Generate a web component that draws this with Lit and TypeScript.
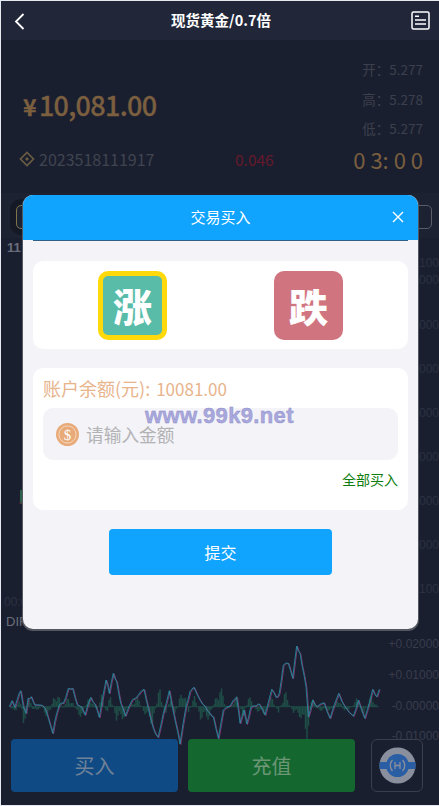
import { LitElement, html, css, svg } from "lit";
import { customElement } from "lit/decorators.js";

const LINE: number[][] = [[28,320],[36,302],[44,322],[52,298],[62,272],[70,320],[78,340],[84,295],[94,290],[104,315],[120,315],[135,325],[145,355],[158,400],[170,340],[178,315],[190,310],[205,265],[218,265],[232,315],[244,320],[255,345],[272,292],[285,312],[298,352],[318,240],[328,280],[340,220],[350,245],[362,310],[376,348],[398,298],[415,285],[432,268],[445,325],[460,385],[474,412],[490,340],[508,272],[525,360],[540,432],[558,320],[570,275],[582,262],[600,300],[615,318],[630,340],[640,350],[655,415],[670,330],[690,318],[710,292],[720,370],[732,330],[740,372],[752,322],[768,318],[778,312],[795,345],[815,268],[828,292],[838,280],[850,195],[865,190],[878,235],[890,138],[900,160],[912,225],[918,260],[925,350],[938,300],[950,320],[972,308],[990,355],[1016,280],[1035,320],[1060,348],[1075,300],[1094,355],[1118,268],[1130,290],[1138,268]];
const HIST: number[][] = [[30,0],[45,-20],[60,30],[72,-50],[85,35],[100,-15],[125,0],[145,-35],[165,40],[175,30],[190,-10],[205,30],[225,0],[235,-30],[250,-15],[270,30],[290,-10],[305,30],[320,-30],[330,35],[350,-35],[370,-30],[395,10],[415,25],[430,-10],[445,-35],[460,-45],[480,55],[495,-25],[510,30],[525,-30],[550,60],[565,-20],[585,30],[600,-30],[630,-30],[660,60],[680,-10],[710,25],[730,-30],[745,30],[770,-10],[790,-20],[815,25],[835,-15],[855,40],[880,-15],[900,-25],[915,-60],[922,-95],[935,30],[950,-10],[1000,-10],[1015,30],[1035,-20],[1070,20],[1090,-20],[1115,30],[1135,-5]];
const BASE = 706.7;

function lerp(a: number[][], x: number): number {
  for (let i = 1; i < a.length; i++) {
    if (x <= a[i][0]) {
      const t = (x - a[i - 1][0]) / (a[i][0] - a[i - 1][0]);
      return a[i - 1][1] + (a[i][1] - a[i - 1][1]) * t;
    }
  }
  return a[a.length - 1][1];
}

const samples: { x: number; y: number }[] = [];
LINE.forEach(([x, y], i) => {
  samples.push({ x: x / 3, y: 600 + y / 3 });
  const next = LINE[i + 1];
  if (next && next[0] - x >= 9) {
    const mx = (x + next[0]) / 2;
    const my = (y + next[1]) / 2;
    samples.push({ x: mx / 3, y: 600 + my / 3 + Math.sin(x * 1.3) * 1.4 });
  }
});
const cyan = samples.map((p) => `${p.x.toFixed(1)},${p.y.toFixed(1)}`).join(" ");
const pink = samples.map((p) => `${(p.x + 0.8).toFixed(1)},${(p.y + 0.5).toFixed(1)}`).join(" ");

const bars: { x: number; v: number }[] = [];
for (let zx = 30; zx <= 1135; zx += 4.5) {
  const comb = 0.85 + 0.45 * Math.sin(zx * 1.1);
  bars.push({ x: zx / 3, v: (lerp(HIST, zx) / 3) * comb });
}

const UPPER: [number, string][] = [[263,"5.28100"],[280,"5.28000"],[325,"5.27000"],[369,"5.26000"],[413,"5.25000"],[457,"5.24000"],[501,"5.23000"],[545,"5.22000"],[589,"5.21100"]];
const LOWER: [number, string][] = [[644,"+0.02000"],[675,"+0.01000"],[706,"-0.00000"],[736,"-0.01000"]];

@customElement("app-root")
export class AppRoot extends LitElement {
  static styles = css`
    :host { display: block; position: relative; width: 439px; height: 806px; overflow: hidden; background: #e6e9f0;
      font-family: "Noto Sans CJK SC", "Liberation Sans", sans-serif; }
    .page { margin: 1px 0 0 1px; height: 804px; display: flex; flex-direction: column; background: #1a1f30; overflow: hidden; }
    .top { height: 39px; flex: none; display: flex; align-items: center; justify-content: space-between; padding: 0 9px 0 13px; background: #212639; position: relative; }
    .title { font-size: 14.5px; font-weight: 700; color: #fff; flex: 1; text-align: center; margin-left: 5px; line-height: 38px; height: 39px; }
    .top svg { display: block; }
    .info { height: 153px; flex: none; box-sizing: border-box; padding: 15px 16px 0 18px; }
    .r1 { display: flex; justify-content: space-between; height: 88px; }
    .price { font-size: 27px; font-weight: 500; color: #7b5f3f; padding: 29px 0 0 4px; line-height: 42px; letter-spacing: -0.7px; -webkit-text-stroke: 0.3px #7b5f3f; }
    .price span { font-size: 23px; font-weight: 700; margin-right: 3px; }
    .ohlc { display: flex; flex-direction: column; font-size: 13.5px; color: #3c404c; line-height: 29.5px; text-align: right; }
    .r2 { display: flex; align-items: center; height: 32px; padding-bottom: 2px; }
    .code { font-size: 16px; color: #40444f; margin-left: 4px; width: 196px; }
    .chg { font-size: 15.5px; color: #66192a; flex: 1; }
    .time { font-size: 22px; color: #7b5f3f; line-height: 28px; }
    .tabs { height: 45px; flex: none; box-sizing: border-box; padding: 12px 7px 9px 15px; display: flex; justify-content: space-between; background: #1d2233; }
    .tab { width: 80px; border-radius: 5px; border: 1px solid #5a5d68; }
    .tab.on { border-color: #7d7448; box-shadow: 0 0 0 6px #151926; }
    .chart { flex: 1; min-height: 0; }
    .chart svg { display: block; overflow: visible; }
    .lb { font: 12px "Liberation Sans", sans-serif; fill: #2c3140; text-anchor: end; }
    .lb2 { font: 12px "Liberation Sans", sans-serif; fill: #383c4a; text-anchor: end; }
    .lt { font: 12px "Liberation Sans", sans-serif; fill: #2c3140; }
    .dif { font: 13px "Liberation Sans", sans-serif; fill: #6a6e7a; }
    .tm { font: 13px "Liberation Sans", sans-serif; fill: #6a6e7a; font-weight: 700; }
    .bottom { flex: none; position: relative; height: 53px; margin-bottom: 13px; padding-left: 10px; display: flex; }
    .b { width: 167px; margin-right: 10px; border-radius: 4px; display: flex; align-items: center; justify-content: center; font-size: 20px; }
    .buy { background: #104a84; color: #6f8298; }
    .pay { background: #14682f; color: #6c9676; }
    .logo { width: 52px; margin-left: 6px; box-sizing: border-box; border: 1px solid #3a3e4e; border-radius: 6px; display: flex; align-items: center; justify-content: center; }
    .modal { position: absolute; left: 23px; top: 195px; width: 395px; height: 434px; box-sizing: border-box; background: #f3f3f8; border-radius: 10px; box-shadow: 0 1px 0 1px #555760; overflow: hidden; }
    .mh { height: 45px; background: #10a4ff; display: flex; align-items: center; justify-content: center; position: relative; color: #fff; font-size: 15px; line-height: 44px; padding-bottom: 1px; box-sizing: border-box; }
    .mh svg { position: absolute; right: 14px; top: 16px; }
    .rule { height: 1px; margin: 0 10px; background: #2f5f86; }
    .card { margin: 0 10px; background: #fff; border-radius: 10px; }
    .pick { margin-top: 20px; height: 88px; position: relative; display: flex; align-items: center; padding-left: 65px; gap: 107px; box-sizing: border-box; }
    .bx { width: 69px; height: 69px; box-sizing: border-box; border-radius: 10px; display: flex; align-items: center; justify-content: center; color: #fff; font-size: 39px; font-weight: 900; line-height: 1; }
    .up { background: #58bca9; border: 5px solid #ffd90a; }
    .dn { background: #d07480; }
    .form { margin-top: 19px; height: 142px; padding: 9px 10px 0; box-sizing: border-box; }
    .bal { font-size: 18px; line-height: 22px; height: 22px; color: #e8b48c; white-space: nowrap; }
    .bal span { font-size: 17px; margin-left: 6px; }
    .field { margin-top: 9px; height: 52px; background: #f3f3f8; border-radius: 10px; display: flex; align-items: center; padding-left: 13px; }
    .ph { font-size: 17.7px; color: #b2b2b4; margin-left: 7px; line-height: 22px; padding-bottom: 1px; }
    .all { text-align: right; font-size: 14px; color: #0d7d0d; margin-top: 8px; line-height: 22px; }
    .act { margin: 19px auto 0; width: 223px; height: 46px; background: #10a4ff; border-radius: 4px; color: #fff; font-size: 16px; display: flex; align-items: center; justify-content: center; }
    .mark { position: absolute; left: 145px; top: 403px; font: 700 22px "Liberation Sans", sans-serif; color: #a9a8dd; letter-spacing: 0.35px; -webkit-text-stroke: 0.4px #8c8bc6; white-space: nowrap; }
  `;

  render() {
    return html`
      <div class="page">
        <div class="top">
          <svg width="12" height="18" viewBox="0 0 12 18"><path d="M9.5 2 L2 9.5 L9.5 17" fill="none" stroke="#fff" stroke-width="1.8"/></svg>
          <div class="title">现货黄金/0.7倍</div>
          <svg width="19" height="19" viewBox="0 0 19 19" fill="none"><rect x="1" y="1" width="17" height="17" rx="1.5" stroke="#fff" stroke-width="1.5"/><path d="M4 5.2h4M4 9h11M4 13h11" stroke="#fff" stroke-width="1.6"/></svg>
        </div>
        <div class="info">
          <div class="r1">
            <div class="price"><span>¥</span>10,081.00</div>
            <div class="ohlc"><div>开：5.277</div><div>高：5.278</div><div>低：5.277</div></div>
          </div>
          <div class="r2">
            <svg width="16" height="16" viewBox="0 0 16 16" fill="none"><path d="M8 1.5 14.5 8 8 14.5 1.5 8Z" stroke="#6a5c42" stroke-width="1.7"/><path d="M8 6 10 8 8 10 6 8Z" fill="#6a5c42"/></svg>
            <div class="code">2023518111917</div>
            <div class="chg">0.046</div>
            <div class="time">0 3: 0 0</div>
          </div>
        </div>
        <div class="tabs"><div class="tab on"></div><div class="tab"></div></div>
        <div class="chart">
          <svg width="438" height="501" viewBox="1 238 438 501">
            <text class="tm" x="7" y="252">11:00</text>
            <text class="lt" x="4" y="606">00:00</text>
            <text class="dif" x="6" y="626">DIF</text>
            <path d="M21 490v14" stroke="#2d5f4a" stroke-width="2"/>
            <path d="M19 503h5" stroke="#5a2430" stroke-width="1"/>
            ${UPPER.map(([y, t]) => svg`<text class="lb" x="439" y=${y + 4}>${t}</text>`)}
            ${LOWER.map(([y, t]) => svg`<text class="lb2" x="439" y=${y + 4}>${t}</text>`)}
            <line x1="10" x2="379" y1=${BASE} y2=${BASE} stroke="#1e4a45"/>
            ${bars.map((b) => svg`<rect x=${b.x - 0.75} y=${Math.min(BASE, BASE - b.v)} width="1.5" height=${Math.abs(b.v)} fill="#1f4c46"/>`)}
            <polyline points=${pink} fill="none" stroke="#8f3f7c" stroke-width="0.8"/>
            <polyline points=${cyan} fill="none" stroke="#1f97aa" stroke-width="0.8"/>
          </svg>
        </div>
        <div class="bottom">
          <div class="b buy">买入</div>
          <div class="b pay">充值</div>
          <div class="logo">
            <svg width="37" height="37" viewBox="0 0 37 37" fill="none">
              <circle cx="18.5" cy="18.5" r="18" fill="#8a8f9e"/>
              <path d="M0.6 15h35.8v7H0.6Z" fill="#2a5ea4"/>
              <circle cx="18.5" cy="18.5" r="11.5" fill="#2a5ea4"/>
              <path d="M13.5 13a8 8 0 0 0 0 11M23.5 13a8 8 0 0 1 0 11" stroke="#8a8f9e" stroke-width="1.3"/>
              <path d="M16 15v7M21 15v7M16 18.5h5" stroke="#8a8f9e" stroke-width="1.3"/>
            </svg>
          </div>
        </div>
      </div>
      <div class="modal">
        <div class="mh">交易买入
          <svg width="12" height="12" viewBox="0 0 12 12"><path d="M1 1 11 11M11 1 1 11" stroke="#fff" stroke-width="1.4"/></svg>
        </div>
        <div class="rule"></div>
        <div class="card pick"><div class="bx up">涨</div><div class="bx dn">跌</div></div>
        <div class="card form">
          <div class="bal">账户余额(元):<span>10081.00</span></div>
          <div class="field">
            <svg width="23" height="23" viewBox="0 0 23 23"><circle cx="11.5" cy="11.5" r="11.5" fill="#e8aa78"/><circle cx="11.5" cy="11.5" r="8.6" fill="none" stroke="#fbeadb" stroke-width="0.7"/><text x="11.5" y="16.5" text-anchor="middle" font-family="Liberation Serif, serif" font-size="15" fill="#fff">$</text></svg>
            <div class="ph">请输入金额</div>
          </div>
          <div class="all">全部买入</div>
        </div>
        <div class="act">提交</div>
      </div>
      <div class="mark">www.99k9.net</div>
    `;
  }
}
